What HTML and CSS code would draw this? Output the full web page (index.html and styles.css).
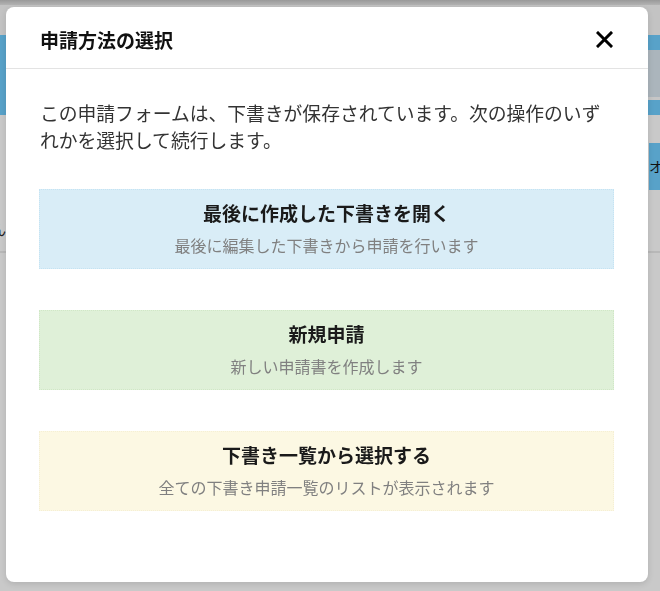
FILE: index.html
```html
<!DOCTYPE html>
<html lang="ja">
<head>
    <meta charset="UTF-8">
    <meta name="viewport" content="width=device-width, initial-scale=1.0">
    <title>申請方法の選択</title>
    <link rel="stylesheet" href="styles.css">
</head>
<body>
    <div class="page">
        <div class="topbar"></div>
        <div class="nav"></div>
        <div class="hero">
            <div class="hero-inner"></div>
        </div>
        <div class="toolbar">
            <span class="toolbar-btn">オプション</span>
        </div>
        <div class="list-head">
            <span class="list-label">ん</span>
        </div>
    </div>

    <div class="overlay">
        <div class="modal">
            <div class="modal-header">
                <h2>申請方法の選択</h2>
                <button class="close" aria-label="閉じる">
                    <svg width="17" height="17" viewBox="0 0 17 17">
                        <path d="M2 2 L15 15 M15 2 L2 15" stroke="#000" stroke-width="3" stroke-linecap="square" fill="none"/>
                    </svg>
                </button>
            </div>
            <div class="modal-body">
                <p class="lead">この申請フォームは、下書きが保存されています。次の操作のいずれかを選択して続行します。</p>
                <div class="choices">
                    <a href="#" class="choice choice-info">
                        <span class="choice-title">最後に作成した下書きを開く</span>
                        <span class="choice-desc">最後に編集した下書きから申請を行います</span>
                    </a>
                    <a href="#" class="choice choice-success">
                        <span class="choice-title">新規申請</span>
                        <span class="choice-desc">新しい申請書を作成します</span>
                    </a>
                    <a href="#" class="choice choice-warning">
                        <span class="choice-title">下書き一覧から選択する</span>
                        <span class="choice-desc">全ての下書き申請一覧のリストが表示されます</span>
                    </a>
                </div>
            </div>
        </div>
    </div>
</body>
</html>
```

FILE: styles.css
```css
* {
    margin: 0;
    padding: 0;
    box-sizing: border-box;
}

body {
    font-family: "Noto Sans CJK JP", "Noto Sans", sans-serif;
    background: #c9c9c9;
    color: #333;
    height: 591px;
    overflow: hidden;
}

/* page behind the dialog, already dimmed */
.topbar {
    height: 5px;
    background: linear-gradient(#999, #b3b3b3);
}

.nav {
    height: 30px;
    background: #c3c3c3;
}

.hero {
    background: #58a2c9;
    padding: 15px 0;
}

.hero-inner {
    height: 50px;
    margin-left: 40px;
    background: #abb5bc;
    border-bottom: 3px solid #c6c6c6;
}

.toolbar {
    height: 75px;
    display: flex;
    justify-content: flex-end;
    padding-top: 28px;
}

.toolbar-btn {
    width: 11px;
    height: 47px;
    background: #58a2c9;
    color: #111;
    font-size: 14px;
    line-height: 47px;
    overflow: hidden;
    white-space: nowrap;
}

.list-head {
    height: 63px;
    border-bottom: 2px solid #b8b8b8;
    padding-top: 26px;
}

.list-label {
    font-size: 14px;
    color: #222;
    margin-left: -8px;
}

/* dialog */
.overlay {
    position: fixed;
    inset: 0;
    padding: 7px 0 0 6px;
}

.modal {
    width: 642px;
    height: 575px;
    background: #fff;
    border-radius: 8px;
    box-shadow: 0 2px 6px rgba(0, 0, 0, 0.12);
}

.modal-header {
    height: 62px;
    border-bottom: 1px solid #e3e3e3;
    display: flex;
    align-items: center;
    justify-content: space-between;
    padding: 0 35px 0 34px;
}

.modal-header h2 {
    font-size: 19px;
    font-weight: 700;
    color: #111;
    margin-top: 3px;
}

.close {
    background: none;
    border: none;
    display: flex;
    cursor: pointer;
    margin-top: 4px;
}

.modal-body {
    padding: 30px 34px 0 33px;
}

.lead {
    font-size: 18.8px;
    line-height: 27px;
    color: #333;
    padding-left: 1px;
    padding-right: 4px;
}

.choices {
    margin-top: 36px;
    display: flex;
    flex-direction: column;
    gap: 41px;
}

.choice {
    display: flex;
    flex-direction: column;
    align-items: center;
    gap: 10px;
    height: 80px;
    padding-top: 11px;
    text-decoration: none;
    border: 1px dotted;
}

.choice-title {
    font-size: 19px;
    line-height: 23px;
    font-weight: 700;
    color: #1a1a1a;
}

.choice-desc {
    font-size: 16px;
    line-height: 22px;
    color: #808080;
}

.choice-info {
    background: #d9edf7;
    border-color: #c4e3f3;
}

.choice-success {
    background: #dff0d8;
    border-color: #d0e7c6;
}

.choice-warning {
    background: #fcf8e3;
    border-color: #f5efd4;
}
```
